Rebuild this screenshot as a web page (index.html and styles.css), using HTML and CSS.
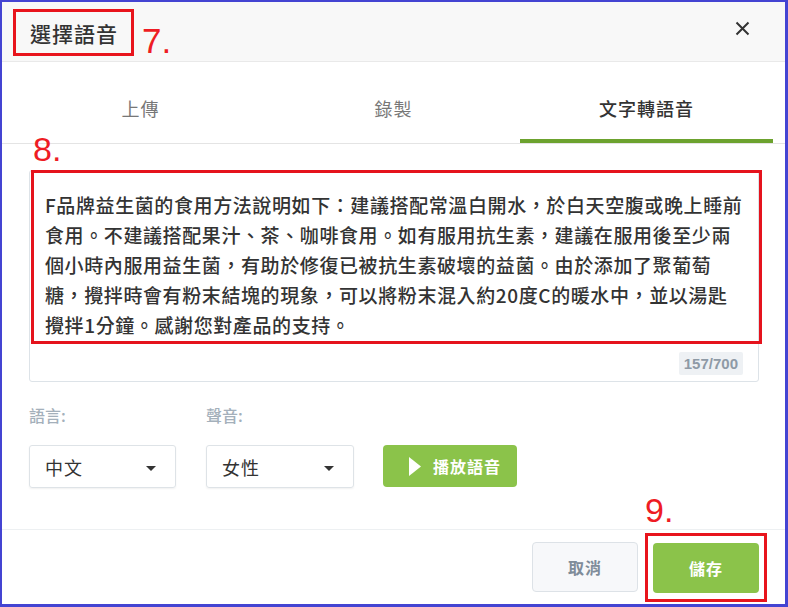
FILE: index.html
```html
<!DOCTYPE html>
<html lang="zh-Hant">
<head>
    <meta charset="UTF-8">
    <meta name="viewport" content="width=device-width, initial-scale=1.0">
    <title>選擇語音</title>
    <link rel="stylesheet" href="styles.css">
</head>
<body>
    <div class="frame">
        <div class="dialog-header">
            <div class="title-box">
                <h2 class="title">選擇語音</h2>
            </div>
            <span class="mark mark-7">7.</span>
            <button class="close" aria-label="close">
                <svg width="15" height="15" viewBox="0 0 15 15">
                    <path d="M1.5 1.5 L13.5 13.5 M13.5 1.5 L1.5 13.5" stroke="#333" stroke-width="2" fill="none"/>
                </svg>
            </button>
        </div>

        <div class="tabs">
            <div class="tab">上傳</div>
            <div class="tab">錄製</div>
            <div class="tab active">文字轉語音</div>
        </div>

        <div class="dialog-body">
            <span class="mark mark-8">8.</span>
            <div class="textarea">
                <div class="text-box">F品牌益生菌的食用方法說明如下：建議搭配常溫白開水，於白天空腹或晚上睡前<br>食用。不建議搭配果汁、茶、咖啡食用。如有服用抗生素，建議在服用後至少兩<br>個小時內服用益生菌，有助於修復已被抗生素破壞的益菌。由於添加了聚葡萄<br>糖，攪拌時會有粉末結塊的現象，可以將粉末混入約20度C的暖水中，並以湯匙<br>攪拌1分鐘。感謝您對產品的支持。</div>
                <div class="counter-row">
                    <span class="counter">157/700</span>
                </div>
            </div>

            <div class="options">
                <div class="field">
                    <label class="field-label">語言:</label>
                    <div class="select select-lang">
                        <span>中文</span>
                        <span class="caret"></span>
                    </div>
                </div>
                <div class="field">
                    <label class="field-label">聲音:</label>
                    <div class="select select-voice">
                        <span>女性</span>
                        <span class="caret"></span>
                    </div>
                </div>
                <button class="play">
                    <svg width="12" height="19" viewBox="0 0 12 19">
                        <path d="M0 0 L12 9.5 L0 19 Z" fill="#fff"/>
                    </svg>
                    <span>播放語音</span>
                </button>
            </div>
        </div>

        <div class="dialog-footer">
            <button class="btn cancel">取消</button>
            <div class="save-box">
                <span class="mark mark-9">9.</span>
                <button class="btn save">儲存</button>
            </div>
        </div>
    </div>
</body>
</html>
```

FILE: styles.css
```css
* {
    margin: 0;
    padding: 0;
    box-sizing: border-box;
    font-family: "Noto Sans CJK TC", "Noto Sans", sans-serif;
}

body {
    background-color: #ffffff;
}

.frame {
    width: 788px;
    height: 607px;
    border-style: solid;
    border-color: #4444d2;
    border-width: 2px 3px 3px 2px;
    display: flex;
    flex-direction: column;
    background-color: #ffffff;
}

/* header */

.dialog-header {
    height: 60px;
    background-color: #f8f8f8;
    border-bottom: 1px solid #e9e9e9;
    display: flex;
    align-items: flex-start;
    padding-left: 11px;
}

.title-box {
    margin-top: 7px;
    height: 47px;
    border: 3px solid #e8141c;
    padding: 0 13px 0 14px;
    display: flex;
    align-items: center;
}

.title {
    font-size: 21px;
    font-weight: 500;
    letter-spacing: 1px;
    color: #333;
}

.mark {
    font-family: "Liberation Sans", Arial, sans-serif;
    color: #ee1c24;
    line-height: 1;
}

.mark-7 {
    font-size: 35px;
    margin-left: 8px;
    margin-top: 21px;
}

.close {
    margin-left: auto;
    margin-right: 35px;
    margin-top: 19px;
    border: none;
    background: none;
    display: flex;
    cursor: pointer;
}

/* tabs */

.tabs {
    display: flex;
    padding: 0 12px;
    border-bottom: 1px solid #e4e4e4;
}

.tab {
    flex: 1;
    height: 81px;
    padding-top: 15px;
    display: flex;
    align-items: center;
    justify-content: center;
    font-size: 18px;
    letter-spacing: 1px;
    color: #777;
    border-bottom: 4px solid transparent;
}

.tab.active {
    color: #333;
    font-weight: 500;
    border-bottom-color: #6ca22e;
}

/* body */

.dialog-body {
    position: relative;
    flex: 1;
    padding: 26px 26px 0 27px;
}

.mark-8 {
    position: absolute;
    left: 31px;
    top: -12px;
    font-size: 34px;
}

.textarea {
    border: 1px solid #dde3e8;
    border-radius: 3px;
}

.text-box {
    margin: -1px -4px 0 1px;
    border: 3px solid #e5131d;
    padding: 17px 0 1px 11px;
    font-size: 19px;
    font-weight: 500;
    line-height: 30px;
    letter-spacing: 0.6px;
    color: #333;
    white-space: nowrap;
}

.counter-row {
    display: flex;
    justify-content: flex-end;
    padding: 8px 15px 6px;
}

.counter {
    height: 23px;
    line-height: 23px;
    padding: 0 5px;
    background-color: #eef1f4;
    color: #8e9aa6;
    font-family: "Liberation Sans", Arial, sans-serif;
    font-size: 15px;
    font-weight: bold;
    border-radius: 2px;
}

.options {
    display: flex;
    align-items: flex-end;
    margin-top: 23px;
}

.field {
    display: flex;
    flex-direction: column;
    gap: 20px;
    margin-right: 30px;
}

.field + .field {
    margin-right: 29px;
}

.field-label {
    font-size: 16px;
    font-weight: 500;
    line-height: 20px;
    color: #a4b0bb;
}

.select {
    height: 43px;
    border: 1px solid #dee3e7;
    border-radius: 3px;
    box-shadow: 0 1px 2px rgba(0, 0, 0, 0.06);
    display: flex;
    align-items: center;
    justify-content: space-between;
    padding: 0 19px 0 15px;
    font-size: 18px;
    letter-spacing: 1px;
    color: #333;
}

.select-lang {
    width: 147px;
}

.select-voice {
    width: 148px;
}

.caret {
    width: 0;
    height: 0;
    border-left: 5.5px solid transparent;
    border-right: 5.5px solid transparent;
    border-top: 5px solid #333;
    margin-top: 4px;
}

.play {
    width: 134px;
    height: 42px;
    margin-bottom: 1px;
    border: none;
    border-radius: 4px;
    background-color: #8bc34a;
    display: flex;
    align-items: center;
    gap: 12px;
    padding-left: 26px;
    color: #fff;
    font-size: 16px;
    font-weight: bold;
    letter-spacing: 1px;
    cursor: pointer;
}

/* footer */

.dialog-footer {
    height: 75px;
    border-top: 1px solid #edf0f2;
    display: flex;
    justify-content: flex-end;
    align-items: center;
    gap: 7px;
    padding-right: 18px;
}

.btn {
    width: 106px;
    height: 50px;
    border-radius: 4px;
    font-size: 16px;
    font-weight: bold;
    letter-spacing: 1px;
    cursor: pointer;
}

.cancel {
    background-color: #f7f8fa;
    border: 1px solid #dde2e7;
    color: #7f8c99;
}

.save-box {
    position: relative;
    border: 3px solid #e8141c;
    padding: 7px 5px 6px;
}

.mark-9 {
    position: absolute;
    left: -3px;
    top: -43px;
    font-size: 34px;
}

.save {
    display: block;
    background-color: #8bc34a;
    border: none;
    color: #fff;
}
```
